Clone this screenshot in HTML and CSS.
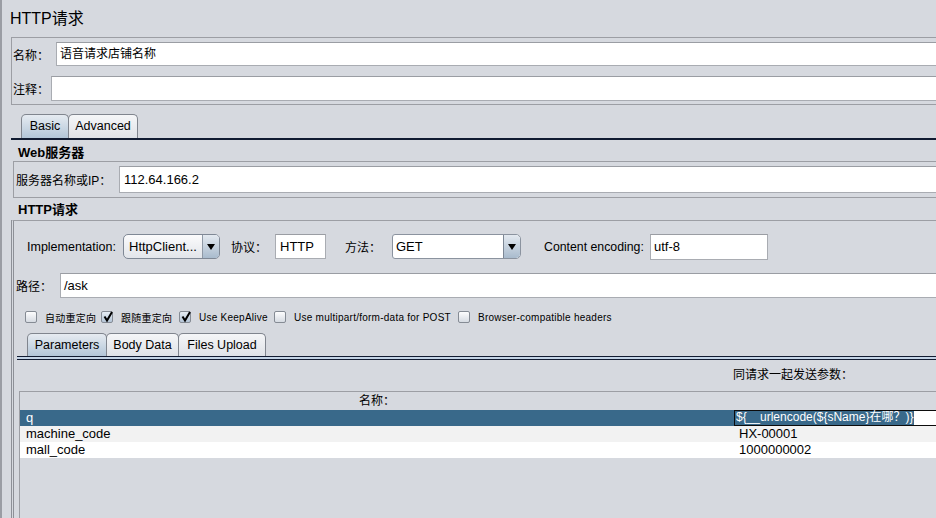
FILE: index.html
```html
<!DOCTYPE html>
<html>
<head>
<meta charset="utf-8">
<title>HTTP请求</title>
<link rel="stylesheet" href="styles.css">
</head>
<body>
<div class="app">
  <div class="title">HTTP请求</div>

  <div class="namebox">
    <div class="nrow"><span class="lbl l1">名称：</span><div class="field f-name">语音请求店铺名称</div></div>
    <div class="nrow r2"><span class="lbl l2">注释：</span><div class="field f-comment"></div></div>
  </div>

  <div class="tabs tabs1">
    <div class="tab sel t-basic">Basic</div>
    <div class="tab t-adv">Advanced</div>
  </div>
  <div class="line1"></div>

  <div class="sec-h h-web">Web服务器</div>
  <div class="webbox">
    <span class="lbl lw">服务器名称或IP：</span>
    <div class="field f-web">112.64.166.2</div>
  </div>

  <div class="sec-h h-http">HTTP请求</div>
  <div class="httpbox">
    <div class="irow">
      <span class="lb-impl">Implementation:</span>
      <div class="combo c-impl">
        <div class="ctext">HttpClient...</div>
        <div class="cbtn"><span class="arrow"></span></div>
      </div>
      <span class="lbl lb-proto">协议：</span>
      <div class="field f-proto">HTTP</div>
      <span class="lbl lb-method">方法：</span>
      <div class="combo c-get">
        <div class="ctext">GET</div>
        <div class="cbtn"><span class="arrow"></span></div>
      </div>
      <span class="lb-enc">Content encoding:</span>
      <div class="field f-enc">utf-8</div>
    </div>

    <div class="prow">
      <span class="lbl lb-path">路径：</span>
      <div class="field f-path">/ask</div>
    </div>

    <div class="cbrow">
      <span class="cb"></span><span class="cl cl1">自动重定向</span>
      <span class="cb on"><svg viewBox="0 0 12 12" width="12" height="12"><path d="M2.5 5.5 L5 9.5 L10 1" fill="none" stroke="#000" stroke-width="2"/></svg></span><span class="cl cl2">跟随重定向</span>
      <span class="cb on"><svg viewBox="0 0 12 12" width="12" height="12"><path d="M2.5 5.5 L5 9.5 L10 1" fill="none" stroke="#000" stroke-width="2"/></svg></span><span class="cl cl3">Use KeepAlive</span>
      <span class="cb"></span><span class="cl cl4">Use multipart/form-data for POST</span>
      <span class="cb"></span><span class="cl cl5">Browser-compatible headers</span>
    </div>

    <div class="tabs tabs2">
      <div class="tab sel t-par">Parameters</div>
      <div class="tab t-body">Body Data</div>
      <div class="tab t-files">Files Upload</div>
    </div>
    <div class="line2"></div>

    <div class="ptitle">同请求一起发送参数：</div>

    <div class="table">
      <div class="trow thead"><div class="c1 hc">名称：</div><div class="c2"></div></div>
      <div class="trow sel"><div class="c1">q</div><div class="c2 edit"><span class="hl">${__urlencode(${sName}在哪？)}</span></div></div>
      <div class="trow alt"><div class="c1">machine_code</div><div class="c2">HX-00001</div></div>
      <div class="trow wht"><div class="c1">mall_code</div><div class="c2">1000000002</div></div>
    </div>
  </div>
</div>
</body>
</html>
```

FILE: styles.css
```css
* { box-sizing: border-box; }

body {
  margin: 0;
  font-family: "Liberation Sans", "Noto Sans CJK SC", sans-serif;
  font-size: 13px;
  color: #000;
  background: #d6d9df;
}

.app {
  width: 936px;
  height: 518px;
  overflow: hidden;
  background: #d6d9df;
  border-left: 2px solid #9a9da4;
  padding-left: 8px;
}

.title {
  height: 37px;
  padding-top: 9px;
  line-height: 20px;
  font-size: 16px;
}

.lbl { font-size: 12px; flex: none; white-space: nowrap; }

.field {
  background: #fff;
  border: 1px solid #a9acb2;
  border-top-color: #9a9da3;
  white-space: nowrap;
  overflow: hidden;
}

/* name / comment */
.namebox {
  margin-left: 1px;
  width: 1500px;
  height: 68px;
  border: 1px solid #9c9ea4;
  padding: 4px 0 0 1px;
}
.nrow { display: flex; align-items: center; }
.nrow.r2 { margin-top: 10px; }
.l1 { width: 43px; }
.l2 { width: 38px; }
.f-name { flex: 1; height: 24px; line-height: 22px; padding-left: 3px; font-size: 12px; }
.f-comment { flex: 1; height: 25px; }

/* tabs */
.tabs { display: flex; align-items: flex-end; }
.tab {
  height: 24px;
  border: 1px solid #80858e;
  border-bottom: none;
  border-radius: 5px 5px 0 0;
  text-align: center;
  line-height: 23px;
  background: linear-gradient(#f5f6f8, #dfe2e7);
  white-space: nowrap;
  font-size: 12.5px;
}
.tab + .tab { margin-left: -1px; }
.tab.sel { background: linear-gradient(#e6ebf1, #b3c6d8); }

.tabs1 { margin: 9px 0 0 1px; padding-left: 10px; height: 24px; }
.t-basic { width: 48px; }
.t-adv { width: 70px; }
.line1 { margin-left: 1px; width: 1500px; height: 2px; background: #111b31; }

/* sections */
.sec-h { font-weight: bold; line-height: 16px; padding-left: 8px; }
.h-web { height: 21px; padding-top: 5px; }
.h-http { height: 22px; padding-top: 4px; }

.webbox {
  margin-left: 3px;
  width: 1500px;
  height: 37px;
  border: 1px solid #9c9ea4;
  display: flex;
  align-items: center;
  padding-left: 2px;
}
.lw { width: 103px; }
.f-web { flex: 1; height: 27px; line-height: 25px; padding-left: 4px; }

.httpbox {
  margin-left: 1px;
  width: 1500px;
  height: 300px;
  border-left: 3px double #8d9097;
  border-top: 1px solid #9c9ea4;
}

/* implementation row */
.irow {
  margin-top: 13px;
  height: 25px;
  display: flex;
  align-items: center;
  padding-left: 13px;
}
.lb-impl { width: 96px; flex: none; white-space: nowrap; font-size: 12.5px; }
.combo {
  flex: none;
  height: 25px;
  display: flex;
  border: 1px solid #7f8895;
  border-radius: 5px;
  overflow: hidden;
}
.ctext { flex: 1; line-height: 23px; white-space: nowrap; }
.cbtn {
  width: 17px;
  flex: none;
  border-left: 1px solid #8f99a6;
  background: linear-gradient(#e3e9f0, #a9bbcd);
  display: flex;
  align-items: center;
  justify-content: center;
}
.arrow {
  width: 0; height: 0;
  border-left: 4px solid transparent;
  border-right: 4px solid transparent;
  border-top: 6px solid #000;
}
.c-impl { width: 97px; background: linear-gradient(#fbfbfc, #e2e5ea); }
.c-impl .ctext { padding-left: 5px; }
.c-get { width: 129px; background: #fff; border-color: #8b939f; border-radius: 3px 5px 5px 3px; }
.c-get .ctext { padding-left: 3px; }
.c-get .cbtn { border-radius: 0 4px 4px 0; border-left-color: #7d8795; }

.lb-proto { margin-left: 11px; width: 44px; }
.f-proto { width: 51px; height: 25px; line-height: 23px; padding-left: 4px; flex: none; }
.lb-method { margin-left: 19px; width: 47px; }
.lb-enc { margin-left: 23px; width: 106px; flex: none; white-space: nowrap; font-size: 12.3px; }
.f-enc { width: 118px; height: 26px; line-height: 24px; padding-left: 3px; flex: none; }

/* path */
.prow {
  margin-top: 14px;
  height: 25px;
  display: flex;
  align-items: center;
  padding-left: 2px;
}
.lb-path { width: 44px; }
.f-path { flex: 1; height: 25px; line-height: 23px; padding-left: 3px; }

/* checkboxes */
.cbrow {
  margin-top: 13px;
  height: 12px;
  display: flex;
  align-items: center;
  padding-left: 11px;
}
.cb {
  width: 12px;
  height: 12px;
  flex: none;
  border: 1px solid #858b94;
  border-radius: 2px;
  background: linear-gradient(#fdfdfe, #d6dbe2);
  position: relative;
}
.cb svg { position: absolute; left: 0; top: -1px; }
.cb.on { background: linear-gradient(#e6ecf3, #b4c5d7); }
.cl {
  margin-left: 8px;
  margin-right: 8px;
  font-size: 10px;
  letter-spacing: 0.25px;
  white-space: nowrap;
  flex: none;
}
.cl1 { width: 48px; }
.cl2 { width: 50px; }
.cl3 { width: 67px; }
.cl4 { width: 156px; }

/* inner tabs */
.tabs2 { margin-top: 10px; padding-left: 13px; height: 23px; }
.tabs2 .tab { height: 23px; line-height: 22px; }
.t-par { width: 80px; }
.t-body { width: 73px; }
.t-files { width: 88px; }
.line2 {
  margin-left: 3px;
  width: 1500px;
  height: 4px;
  border-top: 1px solid #111b31;
  border-bottom: 1px solid #111b31;
  background: #c4d4e6;
}

.ptitle {
  height: 31px;
  padding: 7px 0 0 719px;
  line-height: 16px;
  font-size: 12px;
}

/* table */
.table {
  margin-left: 5px;
  width: 1430px;
  height: 200px;
  border-left: 1px solid #9c9ea4;
  border-top: 1px solid #9c9ea4;
}
.trow {
  display: grid;
  grid-template-columns: 714px 1fr;
  height: 16px;
  line-height: 16px;
  white-space: nowrap;
}
.trow .c1 { padding-left: 6px; }
.trow .c2 { padding-left: 5px; }
.thead { height: 18px; line-height: 18px; }
.thead .hc { text-align: center; padding-left: 0; font-size: 12px; }
.trow.sel { background: #39698a; color: #fff; }
.trow.alt { background: #f2f2f2; }
.trow.wht { background: #fff; }
.trow .c2.edit {
  padding-left: 0;
  background: #fff;
  border: 1px solid #0c0c0c;
  line-height: 14px;
}
.hl {
  display: inline-block;
  height: 14px;
  line-height: 13px;
  padding: 0 1px;
  background: #39698a;
  color: #fff;
  font-size: 12px;
  vertical-align: top;
}
```
